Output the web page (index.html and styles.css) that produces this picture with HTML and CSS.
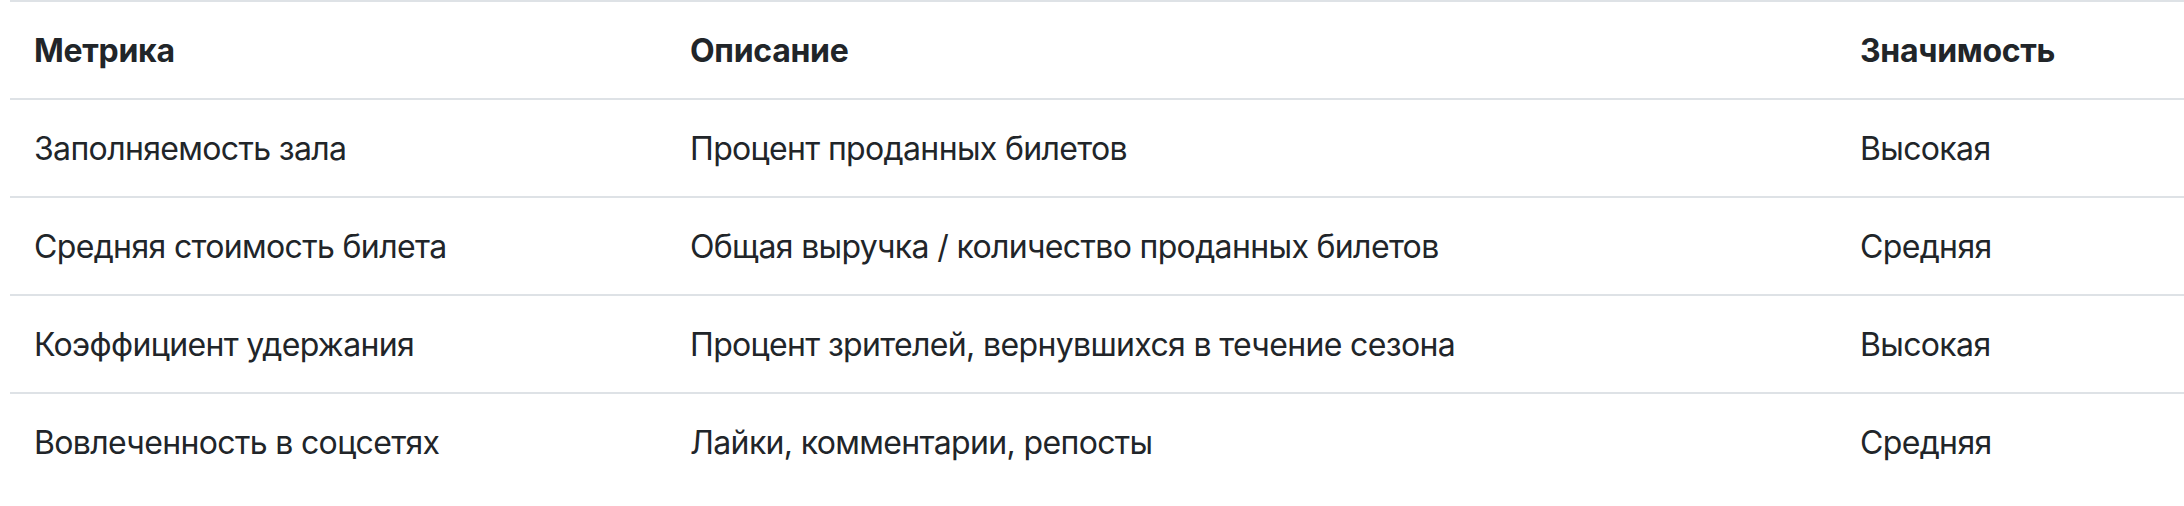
FILE: index.html
```html
<!DOCTYPE html>
<html lang="ru">
<head>
<meta charset="utf-8">
<title>Метрики</title>
<link rel="stylesheet" href="styles.css">
</head>
<body>
<table class="metrics">
  <colgroup>
    <col class="col-metric">
    <col class="col-desc">
    <col class="col-level">
  </colgroup>
  <thead>
    <tr>
      <th>Метрика</th>
      <th>Описание</th>
      <th>Значимость</th>
    </tr>
  </thead>
  <tbody>
    <tr>
      <td>Заполняемость зала</td>
      <td>Процент проданных билетов</td>
      <td>Высокая</td>
    </tr>
    <tr>
      <td>Средняя стоимость билета</td>
      <td>Общая выручка / количество проданных билетов</td>
      <td>Средняя</td>
    </tr>
    <tr>
      <td>Коэффициент удержания</td>
      <td>Процент зрителей, вернувшихся в течение сезона</td>
      <td>Высокая</td>
    </tr>
    <tr>
      <td>Вовлеченность в соцсетях</td>
      <td>Лайки, комментарии, репосты</td>
      <td>Средняя</td>
    </tr>
  </tbody>
</table>
</body>
</html>
```

FILE: styles.css
```css
html, body {
  margin: 0;
  padding: 0;
  background: #ffffff;
}

body {
  padding-left: 10px;
  font-family: Inter, "Noto Sans", "Liberation Sans", sans-serif;
  font-size: 32px;
  line-height: 48px;
  color: #212529;
}

.metrics {
  width: 2174px;
  border-collapse: collapse;
  table-layout: fixed;
}

.col-metric { width: 656px; }
.col-desc { width: 1170px; }
.col-level { width: 348px; }

.metrics th,
.metrics td {
  padding: 25px 24px 23px;
  text-align: left;
  vertical-align: top;
  border-top: 2px solid #dee2e6;
  white-space: nowrap;
}

.metrics td {
  letter-spacing: -0.65px;
}

.metrics th {
  font-weight: 700;
  letter-spacing: -0.3px;
}
```
